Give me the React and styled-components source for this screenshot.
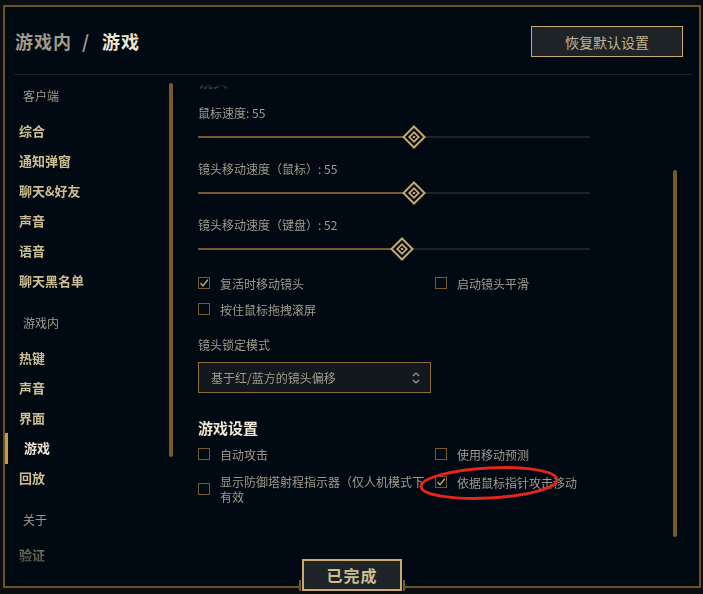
import React from "react";
import styled, { createGlobalStyle } from "styled-components";

const GlobalStyle = createGlobalStyle`
  html, body {
    margin: 0;
    padding: 0;
    background: #0b0e11;
  }
  body {
    font-family: "Noto Sans CJK SC", "Noto Sans", "Liberation Sans", sans-serif;
  }
`;

const navItems = [
  { label: "客户端", section: true, first: true },
  { label: "综合" },
  { label: "通知弹窗" },
  { label: "聊天&好友" },
  { label: "声音" },
  { label: "语音" },
  { label: "聊天黑名单" },
  { label: "游戏内", section: true },
  { label: "热键" },
  { label: "声音" },
  { label: "界面" },
  { label: "游戏", active: true },
  { label: "回放" },
  { label: "关于", section: true },
  { label: "验证" },
];

const sliders = [
  { label: "鼠标速度: 55", value: 55 },
  { label: "镜头移动速度（鼠标）: 55", value: 55 },
  { label: "镜头移动速度（键盘）: 52", value: 52 },
];

const Page = styled.div`
  width: 703px;
  height: 594px;
  box-sizing: border-box;
  padding: 5px 2px 6px 3px;
  background: #0b0e11;
`;

const Frame = styled.div`
  position: relative;
  height: 100%;
  box-sizing: border-box;
  border: 2px solid #6a5226;
  background: #010a13;
  display: flex;
  flex-direction: column;
`;

const Header = styled.div`
  height: 67px;
  display: flex;
  align-items: center;
  justify-content: space-between;
  padding: 0 16px 0 10px;
`;

const Title = styled.div`
  font-size: 18px;
  font-weight: 700;
  letter-spacing: 1px;
  color: #a09b8c;
  display: flex;
  align-items: center;
`;

const Slash = styled.span`
  margin: 0 12px 0 10px;
`;

const Current = styled.span`
  color: #f0e6d2;
`;

const GhostButton = styled.button`
  width: 152px;
  height: 31px;
  box-sizing: border-box;
  border: 1px solid #c8aa6e;
  background: #1e2328;
  color: #c1b58f;
  font-family: inherit;
  font-size: 14px;
  font-weight: 400;
  margin-top: 2px;
`;

const Divider = styled.div`
  height: 1px;
  margin: 0 7px 0 9px;
  background: #1e2328;
`;

const Body = styled.div`
  flex: 1;
  display: flex;
  min-height: 0;
`;

const NavPane = styled.div`
  width: 170px;
  display: flex;
  -webkit-mask-image: linear-gradient(to bottom, #000 455px, rgba(0, 0, 0, 0.1) 500px);
  mask-image: linear-gradient(to bottom, #000 455px, rgba(0, 0, 0, 0.1) 500px);
`;

const NavList = styled.div`
  width: 164px;
  padding-top: 6px;
  overflow: hidden;
`;

const NavItem = styled.div`
  position: relative;
  height: 30px;
  line-height: 30px;
  padding-left: ${(p) => (p.$section ? 18 : p.$active ? 19 : 14)}px;
  margin-top: ${(p) => (p.$section && !p.$first ? 12 : 0)}px;
  margin-bottom: ${(p) => (p.$section ? 5 : 0)}px;
  font-size: ${(p) => (p.$section ? 12 : 13)}px;
  font-weight: ${(p) => (p.$section ? 400 : 700)};
  color: ${(p) => (p.$section ? "#a09b8c" : p.$active ? "#f0e6d2" : "#cdbe91")};

  &::before {
    content: "";
    display: ${(p) => (p.$active ? "block" : "none")};
    position: absolute;
    left: 0;
    top: 0;
    width: 3px;
    height: 31px;
    background: #c89b3c;
  }
`;

const ScrollThumb = styled.div`
  width: 4px;
  height: ${(p) => p.$h}px;
  margin-top: ${(p) => p.$top}px;
  border-radius: 2px;
  background: #785a28;
  flex-shrink: 0;
`;

const Content = styled.div`
  width: 475px;
  margin-left: 23px;
  overflow: hidden;
  -webkit-mask-image: linear-gradient(to bottom, transparent 9px, #000 26px);
  mask-image: linear-gradient(to bottom, transparent 9px, #000 26px);
`;

const FadedHeading = styled.div`
  height: 20px;
  line-height: 20px;
  margin-top: -4px;
  font-size: 15px;
  font-weight: 700;
  color: #f0e6d2;
`;

const SliderBlock = styled.div`
  height: 56px;
  margin-top: ${(p) => (p.$first ? 14 : 0)}px;
`;

const Label = styled.div`
  height: 16px;
  line-height: 16px;
  font-size: 12px;
  color: #a09b8c;
  margin-top: ${(p) => p.$mt || 0}px;
`;

const TrackRow = styled.div`
  position: relative;
  width: 392px;
  height: 16px;
  margin-top: 8px;
  display: flex;
  align-items: center;
`;

const Track = styled.div`
  width: 100%;
  height: 2px;
  background: #1e2328;
  display: flex;
`;

const Fill = styled.div`
  height: 2px;
  background: #785a28;
`;

const Thumb = styled.svg`
  position: absolute;
  top: -4px;
  width: 24px;
  height: 24px;
  transform: translateX(-12px);
`;

const OptionGrid = styled.div`
  display: grid;
  grid-template-columns: 237px 1fr;
  row-gap: ${(p) => p.$gap}px;
  margin-top: ${(p) => p.$top || 0}px;
`;

const Option = styled.div`
  position: relative;
  display: flex;
  align-items: center;
  align-self: ${(p) => (p.$top ? "start" : "stretch")};
  gap: 10px;
  min-height: ${(p) => (p.$top ? 16 : 20)}px;
  font-size: 12px;
  line-height: 15px;
  color: #a09b8c;
`;

const OptionText = styled.span`
  width: 215px;
  white-space: ${(p) => (p.$wrap ? "normal" : "nowrap")};
`;

const Box = styled.span`
  width: 12px;
  height: 12px;
  box-sizing: border-box;
  border: 1px solid #785a28;
  flex-shrink: 0;
  display: flex;
  align-items: center;
  justify-content: center;
`;

const Select = styled.div`
  width: 233px;
  height: 31px;
  box-sizing: border-box;
  margin-top: 9px;
  border: 1px solid #8c6d32;
  background: #12181d;
  display: flex;
  align-items: center;
  justify-content: space-between;
  padding: 0 10px 0 12px;
  font-size: 12px;
  color: #a09b8c;
`;

const SectionTitle = styled.div`
  height: 20px;
  line-height: 20px;
  margin-top: 25px;
  font-size: 15px;
  font-weight: 700;
  color: #f0e6d2;
`;

const Mark = styled.svg`
  position: absolute;
  left: -17px;
  top: -10px;
  width: 142px;
  height: 38px;
  pointer-events: none;
`;

const Dock = styled.div`
  position: absolute;
  left: 50%;
  bottom: -5px;
  transform: translateX(-50%);
  width: 106px;
  display: flex;
  justify-content: center;
  background: #010a13;

  &::before,
  &::after {
    content: "";
    position: absolute;
    bottom: 0;
    width: 2px;
    height: 11px;
    background: #785a28;
  }
  &::before {
    left: 0;
  }
  &::after {
    right: 0;
  }
`;

const DoneButton = styled.button`
  width: 100px;
  height: 32px;
  box-sizing: border-box;
  border: 2px solid #c8aa6e;
  background: #1e2328;
  color: #cdbe91;
  font-family: inherit;
  font-size: 16px;
  font-weight: 700;
  letter-spacing: 1px;
`;

const Check = () => (
  <svg width="10" height="10" viewBox="0 0 10 10">
    <path d="M1.5 5.2 L4 7.8 L8.8 1.8" fill="none" stroke="#c8aa6e" strokeWidth="1.4" />
  </svg>
);

const Checkbox = ({ checked, children, wrap, mark, top }) => (
  <Option $top={top}>
    <Box>{checked && <Check />}</Box>
    <OptionText $wrap={wrap}>{children}</OptionText>
    {mark && (
      <Mark viewBox="0 0 142 38">
        <ellipse cx="71" cy="19" rx="68" ry="15" fill="none" stroke="#e3261a" strokeWidth="3" transform="rotate(-3 71 19)" />
      </Mark>
    )}
  </Option>
);

const Slider = ({ label, value, first }) => (
  <SliderBlock $first={first}>
    <Label>{label}</Label>
    <TrackRow>
      <Track>
        <Fill style={{ width: `${value}%` }} />
      </Track>
      <Thumb viewBox="0 0 24 24" style={{ left: `${value}%` }}>
        <polygon points="12,1.5 22.5,12 12,22.5 1.5,12" fill="#010a13" stroke="#c8aa6e" strokeWidth="2" />
        <polygon points="12,6 18,12 12,18 6,12" fill="#c8aa6e" />
        <polygon points="12,8.6 15.4,12 12,15.4 8.6,12" fill="#010a13" />
        <circle cx="12" cy="12" r="1.3" fill="#c8aa6e" />
      </Thumb>
    </TrackRow>
  </SliderBlock>
);

const Chevrons = () => (
  <svg width="8" height="12" viewBox="0 0 8 12">
    <path d="M1 4 L4 1 L7 4 M1 8 L4 11 L7 8" fill="none" stroke="#a09b8c" strokeWidth="1.2" />
  </svg>
);

const App = () => {
  return (
    <>
      <GlobalStyle />
      <Page>
        <Frame>
          <Header>
            <Title>
              游戏内<Slash>/</Slash>
              <Current>游戏</Current>
            </Title>
            <GhostButton>恢复默认设置</GhostButton>
          </Header>
          <Divider />
          <Body>
            <NavPane>
              <NavList>
                {navItems.map((item, i) => (
                  <NavItem key={i} $section={item.section} $first={item.first} $active={item.active}>
                    {item.label}
                  </NavItem>
                ))}
              </NavList>
              <ScrollThumb $top={8} $h={374} />
            </NavPane>
            <Content>
              <FadedHeading>镜头</FadedHeading>
              {sliders.map((s, i) => (
                <Slider key={i} label={s.label} value={s.value} first={i === 0} />
              ))}
              <OptionGrid $gap={6}>
                <Checkbox checked>复活时移动镜头</Checkbox>
                <Checkbox>启动镜头平滑</Checkbox>
                <Checkbox>按住鼠标拖拽滚屏</Checkbox>
              </OptionGrid>
              <Label $mt={18}>镜头锁定模式</Label>
              <Select>
                基于红/蓝方的镜头偏移
                <Chevrons />
              </Select>
              <SectionTitle>游戏设置</SectionTitle>
              <OptionGrid $gap={10} $top={6}>
                <Checkbox>自动攻击</Checkbox>
                <Checkbox>使用移动预测</Checkbox>
                <Checkbox wrap>显示防御塔射程指示器（仅人机模式下有效</Checkbox>
                <Checkbox checked mark top>
                  依据鼠标指针攻击移动
                </Checkbox>
              </OptionGrid>
            </Content>
            <ScrollThumb $top={95} $h={367} />
          </Body>
          <Dock>
            <DoneButton>已完成</DoneButton>
          </Dock>
        </Frame>
      </Page>
    </>
  );
};

export default App;
